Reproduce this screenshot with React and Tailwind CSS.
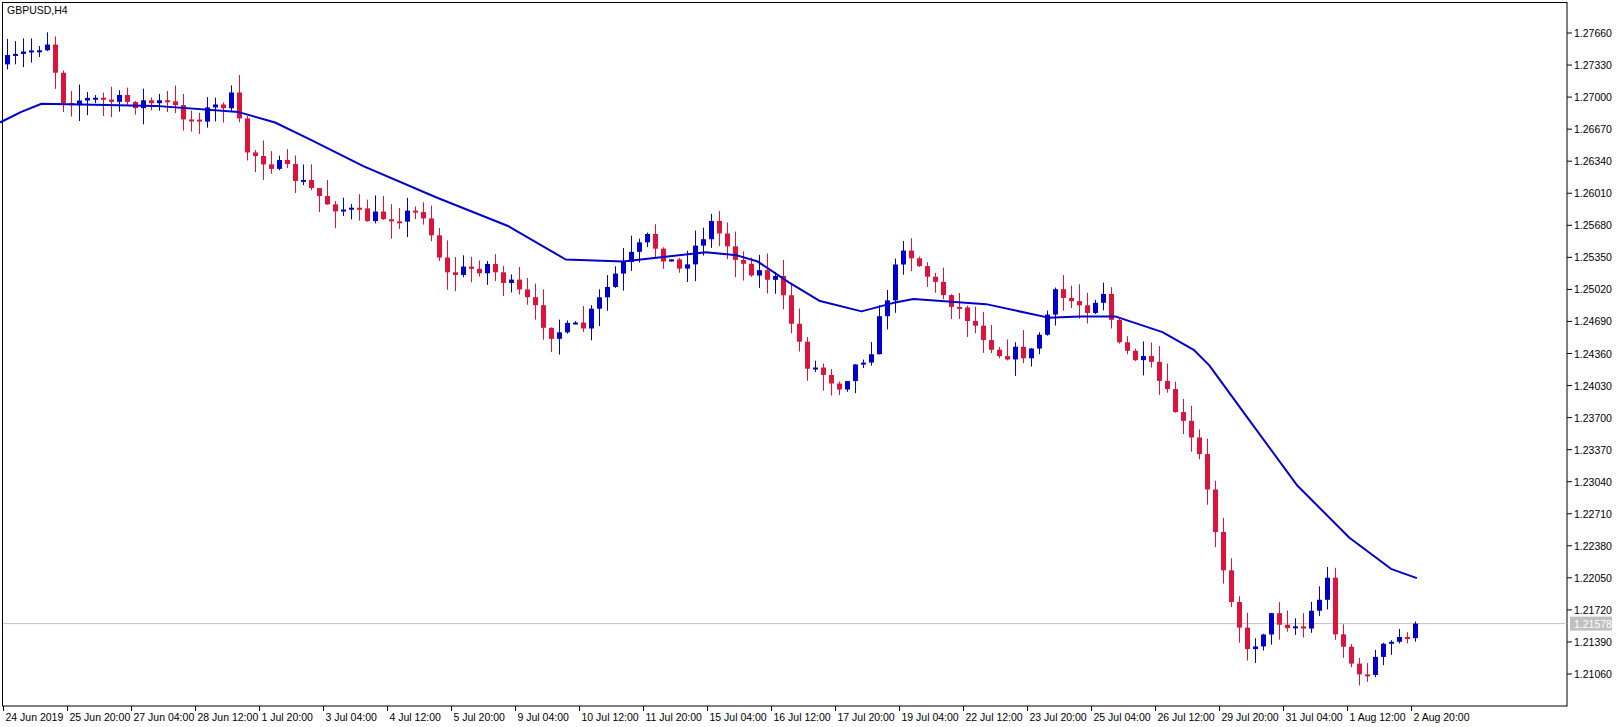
const S = 1.038;
const top0 = 33;
const pxPerUnit = 9711;
const py = (p) => top0 + (1.2766 - p) * pxPerUnit;
const fromDisp = (y) => 1.2766 - (y * S - top0) / pxPerUnit;
const cx = (i) => 7 + 8 * i;

const anchors = [
  [0, 60], [5, 40], [7, 95], [20, 100], [23, 115], [28, 95], [30, 145], [35, 165], [40, 195],
  [45, 210], [52, 205], [55, 265], [60, 255], [65, 290], [68, 320], [72, 315], [76, 265],
  [80, 230], [84, 260], [88, 215], [92, 255], [96, 270], [100, 350], [104, 370], [108, 335],
  [112, 235], [116, 275], [120, 305], [124, 340], [128, 340], [131, 285], [135, 295],
  [137, 280], [139, 335], [143, 355], [146, 395], [149, 440], [152, 545], [155, 630],
  [158, 595], [162, 605], [165, 560], [166, 605], [169, 655], [172, 625], [176, 605],
];

const maPts = [
  [0, 118], [20, 108], [40, 100], [90, 101], [150, 102], [230, 108], [265, 118], [300, 135],
  [350, 160], [420, 190], [490, 218], [545, 250], [600, 252], [680, 243], [710, 246],
  [730, 252], [760, 272], [790, 290], [830, 300], [860, 292], [880, 288], [950, 293],
  [1010, 306], [1040, 305], [1075, 305], [1120, 320], [1150, 337], [1165, 352], [1200, 400],
  [1250, 468], [1300, 518], [1340, 548], [1365, 557],
];

let seed = 7;
const rnd = () => {
  seed = (seed * 16807) % 2147483647;
  return seed / 2147483647;
};

const interp = (i) => {
  for (let k = 0; k < anchors.length - 1; k++) {
    const [a, ya] = anchors[k];
    const [b, yb] = anchors[k + 1];
    if (i >= a && i <= b) return ya + ((yb - ya) * (i - a)) / (b - a);
  }
  return anchors[anchors.length - 1][1];
};

const candles = [];
let prev = fromDisp(62);
for (let i = 0; i <= 176; i++) {
  const close = i === 176 ? 1.21578 : fromDisp(interp(i) + (rnd() - 0.5) * 14);
  const open = prev;
  const hi = Math.max(open, close) + rnd() * 0.0018;
  const lo = Math.min(open, close) - rnd() * 0.0018;
  candles.push({ open, close, hi, lo });
  prev = close;
}

const prices = ['1.27660', '1.27330', '1.27000', '1.26670', '1.26340', '1.26010', '1.25680', '1.25350',
  '1.25020', '1.24690', '1.24360', '1.24030', '1.23700', '1.23370', '1.23040', '1.22710',
  '1.22380', '1.22050', '1.21720', '1.21390', '1.21060'];

const times = ['24 Jun 2019', '25 Jun 20:00', '27 Jun 04:00', '28 Jun 12:00', '1 Jul 20:00', '3 Jul 04:00',
  '4 Jul 12:00', '5 Jul 20:00', '9 Jul 04:00', '10 Jul 12:00', '11 Jul 20:00', '15 Jul 04:00',
  '16 Jul 12:00', '17 Jul 20:00', '19 Jul 04:00', '22 Jul 12:00', '23 Jul 20:00', '25 Jul 04:00',
  '26 Jul 12:00', '29 Jul 20:00', '31 Jul 04:00', '1 Aug 12:00', '2 Aug 20:00'];

const R = 1567;
const B = 706;

export default function App() {
  const cur = py(1.21578);
  return (
    <div className="w-[1620px] h-[727px] bg-white overflow-hidden">
      <svg width="1620" height="727" className="block" fontSize="10.5" fontFamily="Liberation Sans, Arial, sans-serif">
        <rect x="2.5" y="2.5" width={R - 2.5} height={B - 2.5} fill="none" stroke="#000" />
        <line x1="3" x2={R} y1={cur} y2={cur} stroke="#c0c0c0" />
        {candles.map((c, i) => {
          const up = c.close >= c.open;
          const col = up ? '#0000cd' : '#dc143c';
          const y1 = py(Math.max(c.open, c.close));
          const y2 = py(Math.min(c.open, c.close));
          const x = cx(i);
          return (
            <g key={i}>
              <line x1={x + 0.5} x2={x + 0.5} y1={py(c.hi)} y2={py(c.lo)} stroke={col} />
              <rect x={x - 2} y={y1} width="5" height={Math.max(2, y2 - y1)} fill={col} />
            </g>
          );
        })}
        <polyline
          points={maPts.map(([x, y]) => `${x * S},${y * S}`).join(' ')}
          fill="none"
          stroke="#0000cd"
          strokeWidth="2"
          strokeLinejoin="round"
        />
        <text x="7" y="14" fill="#000">GBPUSD,H4</text>
        {prices.map((p, k) => {
          const y = top0 + k * 32.05;
          return (
            <g key={p}>
              <line x1={R} x2={R + 5} y1={y} y2={y} stroke="#000" />
              <text x={R + 7} y={y + 4} fill="#000">{p}</text>
            </g>
          );
        })}
        <rect x={R + 3} y={cur - 7} width="42" height="14" fill="#c0c0c0" />
        <text x={R + 7} y={cur + 4} fill="#fff">1.21578</text>
        {times.map((t, k) => {
          const x = cx(k * 8) - 4 + 0.5;
          return (
            <g key={t}>
              <line x1={x} x2={x} y1={B} y2={B + 5} stroke="#000" />
              <text x={x + 2} y={B + 15} fill="#000">{t}</text>
            </g>
          );
        })}
      </svg>
    </div>
  );
}
